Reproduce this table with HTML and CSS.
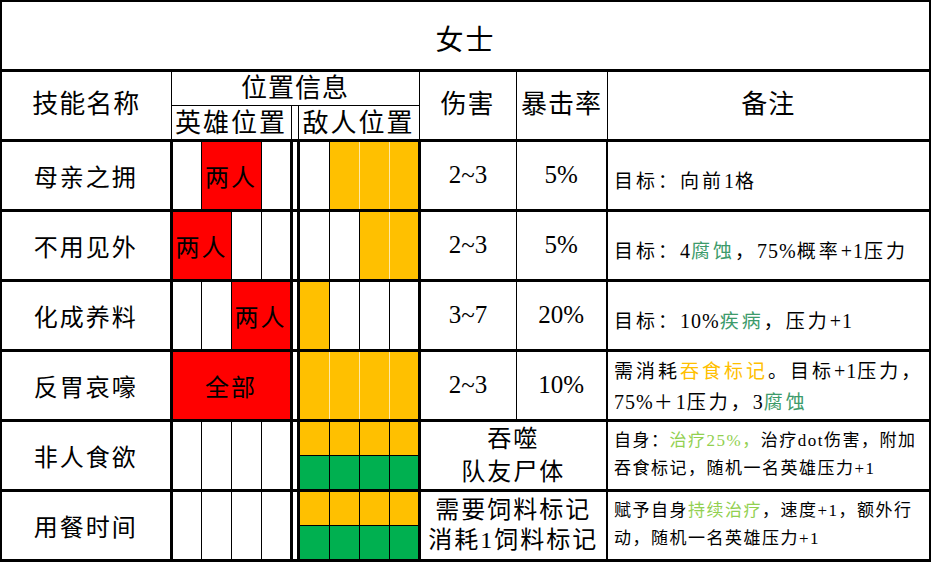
FILE: index.html
```html
<!DOCTYPE html>
<html lang="zh-CN">
<head>
<meta charset="utf-8">
<title>女士</title>
<link rel="stylesheet" href="styles.css">
</head>
<body>
<table class="sheet">
  <colgroup>
    <col class="c-name">
    <col class="c-pos"><col class="c-pos"><col class="c-pos"><col class="c-pos">
    <col class="c-gap">
    <col class="c-pos1"><col class="c-pos"><col class="c-pos"><col class="c-pos">
    <col class="c-dmg"><col class="c-crit"><col class="c-note">
  </colgroup>
  <tr class="r-title"><td colspan="13" class="title">女士</td></tr>
  <tr class="r-half">
    <th rowspan="2" class="hd h-name">技能名称</th>
    <th colspan="9" class="hd h-pos">位置信息</th>
    <th rowspan="2" class="hd h-dmg">伤害</th>
    <th rowspan="2" class="hd h-crit">暴击率</th>
    <th rowspan="2" class="hd h-note">备注</th>
  </tr>
  <tr class="r-half">
    <th colspan="4" class="hd sub">英雄位置</th>
    <th class="h-gap"></th>
    <th colspan="4" class="hd sub">敌人位置</th>
  </tr>

  <tr class="r-row">
    <td class="nm">母亲之拥</td>
    <td class="d"></td><td colspan="2" class="d red">两人</td><td class="d"></td>
    <td class="d gap"></td>
    <td class="d"></td><td class="d y py"></td><td class="d y py"></td><td class="d y"></td>
    <td class="d num dmg">2~3</td><td class="d num">5%</td>
    <td class="note low">目标：向前<span class="lt">1</span>格</td>
  </tr>
  <tr class="r-row">
    <td class="nm">不用见外</td>
    <td colspan="2" class="d red">两人</td><td class="d"></td><td class="d"></td>
    <td class="d gap"></td>
    <td class="d"></td><td class="d"></td><td class="d y py"></td><td class="d y"></td>
    <td class="d num dmg">2~3</td><td class="d num">5%</td>
    <td class="note low">目标：<span class="lt">4</span><span class="tg">腐蚀</span>，<span class="lt">75%</span>概率<span class="lt">+1</span>压力</td>
  </tr>
  <tr class="r-row">
    <td class="nm">化成养料</td>
    <td class="d"></td><td class="d"></td><td colspan="2" class="d red">两人</td>
    <td class="d gap"></td>
    <td class="d y"></td><td class="d"></td><td class="d"></td><td class="d"></td>
    <td class="d num dmg">3~7</td><td class="d num">20%</td>
    <td class="note low">目标：<span class="lt">10%</span><span class="tg">疾病</span>，压力<span class="lt">+1</span></td>
  </tr>
  <tr class="r-row">
    <td class="nm">反胃哀嚎</td>
    <td colspan="4" class="d red">全部</td>
    <td class="d gap"></td>
    <td class="d y py"></td><td class="d y py"></td><td class="d y py"></td><td class="d y"></td>
    <td class="d num dmg">2~3</td><td class="d num">10%</td>
    <td class="note two">需消耗<span class="gold">吞食标记</span>。目标<span class="lt">+1</span>压力，<br><span class="lt">75%</span>＋<span class="lt">1</span>压力，<span class="lt">3</span><span class="tg">腐蚀</span></td>
  </tr>

  <tr class="r-half">
    <td rowspan="2" class="nm">非人食欲</td>
    <td rowspan="2" class="d"></td><td rowspan="2" class="d"></td><td rowspan="2" class="d"></td><td rowspan="2" class="d"></td>
    <td rowspan="2" class="d gap"></td>
    <td class="y top"></td><td class="y top"></td><td class="y top"></td><td class="y top"></td>
    <td rowspan="2" colspan="2" class="d txt dmg tall">吞噬<br>队友尸体</td>
    <td rowspan="2" class="note sm">自身：<span class="lg">治疗25%，</span>治疗dot伤害，附加<br>吞食标记，随机一名英雄压力+1</td>
  </tr>
  <tr class="r-half">
    <td class="d g"></td><td class="d g"></td><td class="d g"></td><td class="d g"></td>
  </tr>

  <tr class="r-half">
    <td rowspan="2" class="nm">用餐时间</td>
    <td rowspan="2" class="d"></td><td rowspan="2" class="d"></td><td rowspan="2" class="d"></td><td rowspan="2" class="d"></td>
    <td rowspan="2" class="d gap"></td>
    <td class="y top"></td><td class="y top"></td><td class="y top"></td><td class="y top"></td>
    <td rowspan="2" colspan="2" class="d txt dmg">需要饲料标记<br>消耗1饲料标记</td>
    <td rowspan="2" class="note sm">赋予自身<span class="lg">持续治疗</span>，速度+1，额外行<br>动，随机一名英雄压力+1</td>
  </tr>
  <tr class="r-half">
    <td class="d g"></td><td class="d g"></td><td class="d g"></td><td class="d g"></td>
  </tr>
</table>
</body>
</html>
```

FILE: styles.css
```css
html, body {
  margin: 0;
  padding: 0;
  background: #ffffff;
}

body {
  width: 932px;
  height: 562px;
  overflow: hidden;
  font-family: "Liberation Serif", "Noto Sans CJK SC", serif;
  color: #000000;
}

.sheet {
  border-collapse: collapse;
  table-layout: fixed;
  width: 931px;
}

.sheet td,
.sheet th {
  border: 1px solid #000000;
  padding: 0;
  text-align: center;
  vertical-align: middle;
  font-weight: normal;
  white-space: nowrap;
  overflow: hidden;
}

/* columns */
.c-name { width: 170px; }
.c-pos { width: 30px; }
.c-pos1 { width: 31px; }
.c-gap { width: 7px; }
.c-dmg { width: 97px; }
.c-crit { width: 91px; }
.c-note { width: 323px; }

/* rows */
.r-title { height: 69px; }
.r-half { height: 35px; }
.r-row { height: 70px; }

/* title */
.sheet .title {
  border-width: 2px 2px 3px 2px;
  font-size: 28px;
  letter-spacing: 2px;
  padding-top: 6px;
}

/* header */
.sheet .hd {
  font-size: 26px;
  letter-spacing: 1px;
  line-height: 1;
}
.sheet .h-name { border-left-width: 2px; border-bottom-width: 3px; }
.sheet .h-dmg,
.sheet .h-crit { border-bottom-width: 3px; }
.sheet .h-note { border-right-width: 2px; border-bottom-width: 3px; }
.sheet .h-pos { padding-top: 2px; }
.sheet .sub {
  letter-spacing: 2px;
  border-bottom-width: 3px;
  padding-top: 3px;
}
.sheet .h-gap { border-bottom-width: 3px; }

/* data cells */
.sheet .d { border-bottom-width: 3px; }
.sheet .nm {
  font-size: 24px;
  letter-spacing: 2px;
  border-left-width: 2px;
  border-right-width: 3px;
  border-bottom-width: 3px;
}
.sheet .gap {
  border-left-width: 3px;
  border-right-width: 3px;
}
.sheet .dmg { border-left-width: 3px; }

.sheet .red {
  background: #ff0000;
  font-size: 24px;
  letter-spacing: 2px;
}
.sheet .y { background: #ffc000; }
.sheet .py { border-right-color: #ffe9a8; }
.sheet .top { border-bottom-width: 1px; }
.sheet .g { background: #00b050; }

.sheet .num { font-size: 25px; }
.sheet .txt {
  font-size: 24px;
  letter-spacing: 2px;
  line-height: 30px;
}
.sheet .tall { line-height: 33px; padding-top: 1px; }

/* notes */
.sheet .note {
  text-align: left;
  padding-left: 6px;
  border-left-width: 2px;
  border-right-width: 2px;
  border-bottom-width: 3px;
  font-size: 19px;
  letter-spacing: 3px;
}
.sheet .note .lt { letter-spacing: 1px; font-size: 20px; }
.sheet .low { padding-top: 8px; }
.sheet .two { line-height: 30px; padding-top: 4px; }
.sheet .sm {
  font-size: 17px;
  letter-spacing: 1.5px;
  line-height: 28px;
}

.tg { color: #3d9b6b; }
.gold { color: #ffc000; }
.lg { color: #92d050; }
```
